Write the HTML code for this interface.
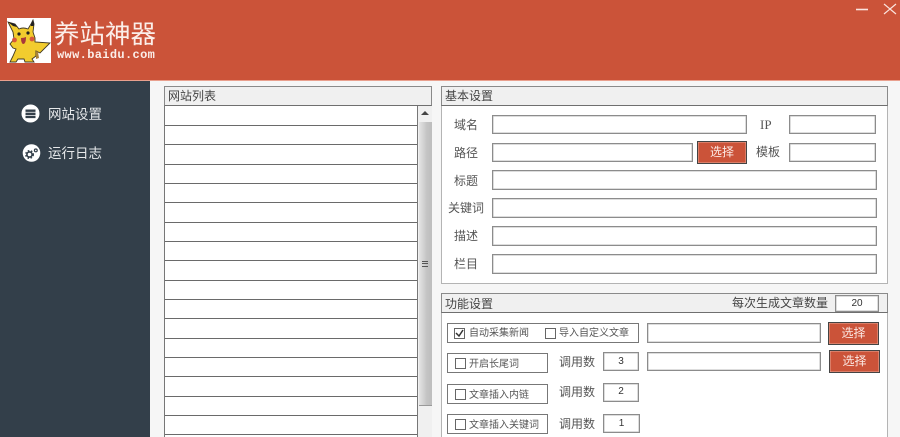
<!DOCTYPE html>
<html><head><meta charset="utf-8">
<style>
html,body{margin:0;padding:0}
body{width:900px;height:437px;overflow:hidden;position:relative;background:#f6f6f6;font-family:"Liberation Sans","Noto Sans CJK SC",sans-serif;color:#444;font-size:12px}
div,span{position:absolute;box-sizing:border-box}
.t{white-space:nowrap;line-height:16px;filter:blur(.25px)}
.in{background:#fff;border:1px solid #8c8c8c;box-shadow:inset 0 0 0 .5px #bbb;font-size:10px;text-align:center;color:#333}
.ph{background:#f0f0f0;border:1px solid #8a8a8a;border-bottom:1.5px solid #6f6f6f}
.pb{background:#fff;border:1px solid #b4b4b4;border-top:0}
.btn{background:#cb5339;border:1.5px solid #444;box-shadow:inset 0 0 0 .5px #e8a898;color:#fbe9e4;text-align:center;font-size:12px;white-space:nowrap}
.box{border:1px solid #777;background:#fff}
.cb{width:11px;height:11px;border:1.5px solid #666;background:#fff}
.ln{left:165px;width:253px;height:1px;background:#6a6a6a}
.s{font-size:10px;color:#555}
</style></head><body>
<div style="left:0;top:0;width:900px;height:80px;background:#cb5339"></div>
<div style="left:0;top:80px;width:900px;height:1px;background:#e9a08e"></div>
<div style="left:0;top:81px;width:150px;height:356px;background:#333f4a"></div>

<div style="left:7px;top:18px;width:44px;height:45px;background:#fff"></div>
<svg style="position:absolute;left:7px;top:18px" width="44" height="45" viewBox="0 0 44 45">
<path d="M1 4 L8 6 L12 11 Q16 9 21 11 L24 6 L26 2 L27 6 L26 14 L28 20 L28 24 L43 25 L33 35 L29 33 L29 38 L25 41 L27 44 L18 44 L17 41 L11 41 L9 44 L3 44 L6 38 L9 31 L6 30 L3 26 L7 21 L6 14 Z" fill="#f2cc2e" stroke="#3f3722" stroke-width=".9"/>
<path d="M1 4 L8 6 L10 9 L6 8 Z M24 6 L26 2 L27 6 L26.5 8 L24 8 Z" fill="#222"/>
<circle cx="12" cy="16" r="1.6" fill="#222"/><circle cx="21" cy="15" r="1.6" fill="#222"/>
<circle cx="7.5" cy="22" r="2.4" fill="#d8573a"/><circle cx="25" cy="21" r="2.4" fill="#d8573a"/>
<path d="M14 20 Q17 20 19 19 Q19 26 16 26 Q14 25 14 20Z" fill="#a8383a"/>
<path d="M29 33 L31 34 L32 40 L29 41 Z" fill="#a8823a"/>
</svg>

<div class="t" style="left:54px;top:18px;font-size:25.5px;line-height:34px;color:#fbeee9">养站神器</div>
<div class="t" style="left:57px;top:47px;font-family:'Liberation Mono',monospace;font-size:12px;font-weight:bold;color:#fbeee9;letter-spacing:.35px">www.baidu.com</div>

<svg style="position:absolute;left:852px;top:2px" width="48" height="14" viewBox="0 0 48 14"><path d="M4 7.5H16" stroke="#fbe4de" stroke-width="1.6"/><path d="M32 2L44 12M44 2L32 12" stroke="#fbe4de" stroke-width="1.2" fill="none"/></svg>

<svg style="position:absolute;left:21px;top:104px" width="20" height="20" viewBox="0 0 20 20"><circle cx="9.5" cy="9.5" r="9" fill="#fff"/><path d="M4.5 5.5h10v2.4h-10zM4.5 8.6h10V11h-10zM4.5 11.7h10v2.4h-10z" fill="#333f4a"/></svg>
<div class="t" style="left:48px;top:106px;font-size:13.5px;line-height:18px;color:#e6e8ea">网站设置</div>
<svg style="position:absolute;left:22px;top:144px" width="20" height="20" viewBox="0 0 20 20"><circle cx="9.5" cy="9" r="8.8" fill="#fff"/><circle cx="7.5" cy="10.5" r="2.6" fill="none" stroke="#333f4a" stroke-width="1.6"/><circle cx="7.5" cy="10.5" r="3.8" fill="none" stroke="#333f4a" stroke-width="1.4" stroke-dasharray="1.6 1.6"/><circle cx="13.8" cy="6.4" r="1.4" fill="none" stroke="#333f4a" stroke-width="1.2"/></svg>
<div class="t" style="left:48px;top:145px;font-size:13.5px;line-height:18px;color:#e6e8ea">运行日志</div>

<!-- list -->
<div style="left:164px;top:86px;width:268px;height:351px;background:#fff;border-left:1px solid #777;border-right:1px solid #999"></div>
<div class="ph" style="left:164px;top:86px;width:268px;height:20px"></div>
<div class="t" style="left:168px;top:88px">网站列表</div>
<div class="ln" style="top:125px"></div><div class="ln" style="top:144px"></div><div class="ln" style="top:164px"></div><div class="ln" style="top:183px"></div><div class="ln" style="top:202px"></div><div class="ln" style="top:222px"></div><div class="ln" style="top:241px"></div><div class="ln" style="top:260px"></div><div class="ln" style="top:280px"></div><div class="ln" style="top:299px"></div><div class="ln" style="top:318px"></div><div class="ln" style="top:338px"></div><div class="ln" style="top:357px"></div><div class="ln" style="top:376px"></div><div class="ln" style="top:396px"></div><div class="ln" style="top:415px"></div><div class="ln" style="top:434px"></div>
<div style="left:417px;top:106px;width:15px;height:331px;background:#f0f0f0;border-left:1px solid #777"></div>
<div style="left:419px;top:122px;width:13px;height:284px;background:linear-gradient(90deg,#e4e4e4,#c4c4c4 60%,#bdbdbd);border-bottom:1px solid #999"></div>
<svg style="position:absolute;left:421px;top:111px" width="8" height="5"><path d="M0 4L4 0L8 4Z" fill="#444"/></svg>
<div style="left:422px;top:261px;width:6px;height:6px;border-top:1px solid #555;border-bottom:1px solid #555"></div>
<div style="left:422px;top:263px;width:6px;height:1px;background:#555"></div>

<!-- basic -->
<div class="pb" style="left:441px;top:105px;width:447px;height:179px"></div>
<div class="ph" style="left:441px;top:86px;width:447px;height:20px"></div>
<div class="t" style="left:445px;top:88px">基本设置</div>
<div class="t" style="left:454px;top:117px;color:#555">域名</div>
<div class="in" style="left:492px;top:115px;width:255px;height:19px"></div>
<div class="t" style="left:760px;top:117px;font-family:'Liberation Serif',serif;color:#555;font-size:13px">IP</div>
<div class="in" style="left:789px;top:115px;width:87px;height:19px"></div>
<div class="t" style="left:454px;top:145px;color:#555">路径</div>
<div class="in" style="left:492px;top:143px;width:201px;height:19px"></div>
<div class="btn" style="left:697px;top:141px;width:50px;height:23px;line-height:20px">选择</div>
<div class="t" style="left:756px;top:144px;color:#555">模板</div>
<div class="in" style="left:789px;top:143px;width:87px;height:19px"></div>
<div class="t" style="left:454px;top:173px;color:#555">标题</div>
<div class="in" style="left:492px;top:170px;width:385px;height:20px"></div>
<div class="t" style="left:448px;top:200px;color:#555">关键词</div>
<div class="in" style="left:492px;top:198px;width:385px;height:20px"></div>
<div class="t" style="left:454px;top:228px;color:#555">描述</div>
<div class="in" style="left:492px;top:226px;width:385px;height:20px"></div>
<div class="t" style="left:454px;top:256px;color:#555">栏目</div>
<div class="in" style="left:492px;top:254px;width:385px;height:20px"></div>

<!-- feature -->
<div class="pb" style="left:441px;top:312px;width:447px;height:125px;border-bottom:0"></div>
<div class="ph" style="left:441px;top:293px;width:447px;height:20px"></div>
<div class="t" style="left:445px;top:296px">功能设置</div>
<div class="t" style="left:732px;top:295px;color:#444">每次生成文章数量</div>
<div class="in" style="left:835px;top:295px;width:44px;height:17px;line-height:16px">20</div>

<div class="box" style="left:447px;top:323px;width:192px;height:20px"></div>
<div class="cb" style="left:454px;top:328px"></div>
<svg style="position:absolute;left:455px;top:329px" width="9" height="9"><path d="M1 4L4 7L8 1" stroke="#333" stroke-width="1.5" fill="none"/></svg>
<div class="t s" style="left:469px;top:326px">自动采集新闻</div>
<div class="cb" style="left:545px;top:328px"></div>
<div class="t s" style="left:559px;top:326px">导入自定义文章</div>
<div class="in" style="left:647px;top:323px;width:174px;height:20px"></div>
<div class="btn" style="left:828px;top:322px;width:51px;height:23px;line-height:20px">选择</div>

<div class="box" style="left:447px;top:353px;width:101px;height:20px"></div>
<div class="cb" style="left:455px;top:358px"></div>
<div class="t s" style="left:469px;top:357px">开启长尾词</div>
<div class="t" style="left:559px;top:354px;color:#555">调用数</div>
<div class="in" style="left:603px;top:352px;width:36px;height:19px;line-height:17px">3</div>
<div class="in" style="left:647px;top:352px;width:174px;height:19px"></div>
<div class="btn" style="left:829px;top:350px;width:51px;height:23px;line-height:20px">选择</div>

<div class="box" style="left:447px;top:384px;width:101px;height:20px"></div>
<div class="cb" style="left:455px;top:389px"></div>
<div class="t s" style="left:469px;top:388px">文章插入内链</div>
<div class="t" style="left:559px;top:384px;color:#555">调用数</div>
<div class="in" style="left:603px;top:383px;width:36px;height:19px;line-height:16px">2</div>

<div class="box" style="left:447px;top:414px;width:101px;height:20px"></div>
<div class="cb" style="left:455px;top:419px"></div>
<div class="t s" style="left:469px;top:418px">文章插入关键词</div>
<div class="t" style="left:559px;top:416px;color:#555">调用数</div>
<div class="in" style="left:603px;top:414px;width:37px;height:19px;line-height:17px">1</div>
</body></html>
